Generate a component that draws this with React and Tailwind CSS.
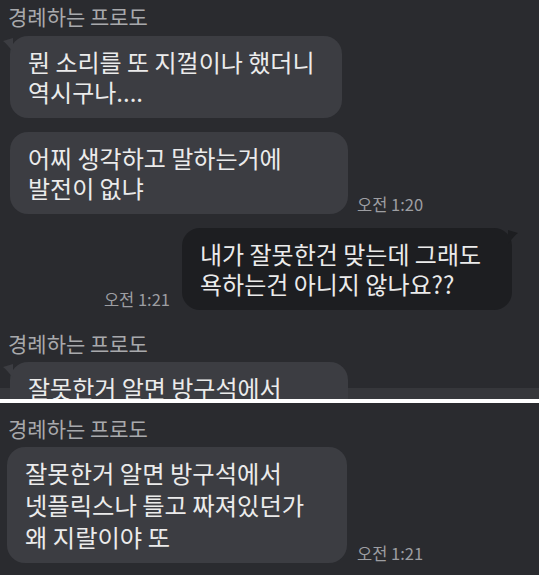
import React from 'react'

const font = { fontFamily: '"Noto Sans CJK KR", "Noto Sans", sans-serif' }

function Name({ className = '' }) {
  return <p className={`pl-[8px] text-[21px] leading-[24px] text-[#a8a9ac] ${className}`}>경례하는 프로도</p>
}

function Time({ children, className = '' }) {
  return <span className={`whitespace-nowrap text-[16.5px] leading-[18px] text-[#9d9ea2] ${className}`}>{children}</span>
}

function TailLeft({ color }) {
  return (
    <svg className="absolute left-[-7px] top-[2px]" width="10" height="14" viewBox="0 0 10 14">
      <path d="M10 0 L0 3 Q4 6 10 14 Z" fill={color} />
    </svg>
  )
}

function TailRight({ color }) {
  return (
    <svg className="absolute right-[-6px] top-[2px]" width="10" height="14" viewBox="0 0 10 14">
      <path d="M0 0 L10 3 Q6 6 0 14 Z" fill={color} />
    </svg>
  )
}

function Bubble({ lines, className = '', tail, dark }) {
  const color = dark ? '#1d1e21' : '#3c3d42'
  return (
    <div className={`relative rounded-[18px] ${dark ? 'bg-[#1d1e21]' : 'bg-[#3c3d42]'} ${className}`}>
      {tail === 'left' ? <TailLeft color={color} /> : null}
      {tail === 'right' ? <TailRight color={color} /> : null}
      {lines.map((line) => (
        <p key={line} className="whitespace-nowrap text-[#ebebeb]">{line}</p>
      ))}
    </div>
  )
}

export default function App() {
  return (
    <div className="flex h-[575px] w-[539px] flex-col overflow-hidden bg-white" style={font}>
      <section className="relative h-[399px] overflow-hidden bg-[#2a2b2f]">
        <div className="absolute inset-x-0 bottom-0 h-[11px] bg-[#36373b]" />
        <div className="relative flex flex-col">
          <Name className="pt-[4px]" />
          <Bubble
            tail="left"
            className="ml-[10px] mt-[8px] w-[332px] py-[11px] pl-[18px] text-[24px] leading-[30px]"
            lines={['뭔 소리를 또 지껄이나 했더니', '역시구나....']}
          />
          <div className="mt-[14px] flex items-end">
            <Bubble
              className="ml-[10px] w-[338px] py-[11px] pl-[18px] text-[24px] leading-[30px]"
              lines={['어찌 생각하고 말하는거에', '발전이 없냐']}
            />
            <Time className="mb-[1px] ml-[9px]">오전 1:20</Time>
          </div>
          <div className="mt-[14px] flex items-end justify-end pr-[27px]">
            <Time className="mb-[2px] mr-[12px]">오전 1:21</Time>
            <Bubble
              dark
              tail="right"
              className="w-[330px] py-[11px] pl-[18px] text-[24px] leading-[30px]"
              lines={['내가 잘못한건 맞는데 그래도', '욕하는건 아니지 않나요??']}
            />
          </div>
          <Name className="mt-[21px]" />
          <Bubble
            tail="left"
            className="ml-[10px] mt-[7px] w-[338px] py-[11px] pl-[18px] text-[24px] leading-[30px]"
            lines={['잘못한거 알면 방구석에서', '넷플릭스나 틀고 짜져있던가']}
          />
        </div>
      </section>
      <div className="h-[4px] bg-white" />
      <section className="flex flex-1 flex-col bg-[#2a2b2f]">
        <Name className="pl-[5px] pt-[13px]" />
        <div className="mt-[7px] flex items-end">
          <Bubble
            className="ml-[7px] w-[340px] py-[10px] pl-[18px] text-[24.3px] leading-[32px]"
            lines={['잘못한거 알면 방구석에서', '넷플릭스나 틀고 짜져있던가', '왜 지랄이야 또']}
          />
          <Time className="mb-[1px] ml-[10px]">오전 1:21</Time>
        </div>
      </section>
    </div>
  )
}
